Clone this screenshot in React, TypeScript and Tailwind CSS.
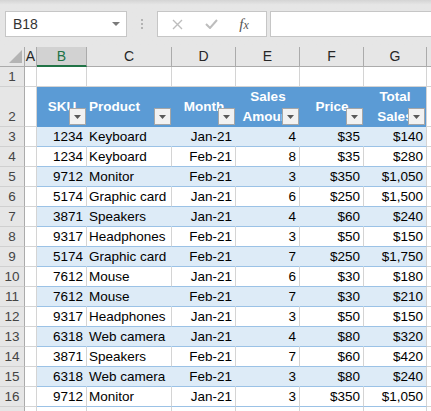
import React from 'react';

// Excel-like sheet: name box + formula bar, column/row headers, a blue table

const COL_W = ['w-[12px]', 'w-[50px]', 'w-[85px]', 'w-[64px]', 'w-[64px]', 'w-[64px]', 'w-[63px]'];
const COL_LETTERS = ['A', 'B', 'C', 'D', 'E', 'F', 'G'];

type Row = [string, string, string, string, string, string];

const rows: Row[] = [
  ['1234', 'Keyboard', 'Jan-21', '4', '$35', '$140'],
  ['1234', 'Keyboard', 'Feb-21', '8', '$35', '$280'],
  ['9712', 'Monitor', 'Feb-21', '3', '$350', '$1,050'],
  ['5174', 'Graphic card', 'Jan-21', '6', '$250', '$1,500'],
  ['3871', 'Speakers', 'Jan-21', '4', '$60', '$240'],
  ['9317', 'Headphones', 'Feb-21', '3', '$50', '$150'],
  ['5174', 'Graphic card', 'Feb-21', '7', '$250', '$1,750'],
  ['7612', 'Mouse', 'Jan-21', '6', '$30', '$180'],
  ['7612', 'Mouse', 'Feb-21', '7', '$30', '$210'],
  ['9317', 'Headphones', 'Jan-21', '3', '$50', '$150'],
  ['6318', 'Web camera', 'Jan-21', '4', '$80', '$320'],
  ['3871', 'Speakers', 'Feb-21', '7', '$60', '$420'],
  ['6318', 'Web camera', 'Feb-21', '3', '$80', '$240'],
  ['9712', 'Monitor', 'Jan-21', '3', '$350', '$1,050'],
];

const headers = [
  { lines: ['SKU'], align: 'justify-center text-center' },
  { lines: ['Product'], align: 'justify-start text-left pl-[2px]' },
  { lines: ['Month'], align: 'justify-center text-center' },
  { lines: ['Sales', 'Amount'], align: 'justify-center text-center' },
  { lines: ['Price'], align: 'justify-center text-center' },
  { lines: ['Total', 'Sales'], align: 'justify-center text-center' },
];

function FilterButton() {
  return (
    <div className="absolute right-[1px] bottom-[2px] w-[17px] h-[17px] bg-[#f2f2f2] border border-[#a6a6a6] flex items-center justify-center">
      <svg width="7" height="4" viewBox="0 0 7 4">
        <path d="M0 0 L7 0 L3.5 4 Z" fill="#595959" />
      </svg>
    </div>
  );
}

function RowHeader({ n, tall }: { n?: number; tall?: boolean }) {
  return (
    <div
      className={`w-[25px] shrink-0 ${tall ? 'h-[40px]' : 'h-[20px]'} bg-[#e6e6e6] border-r border-r-[#ababab] border-b border-b-[#d0d0d0] flex items-end justify-center text-[13.5px] leading-[18px] text-[#444]`}
    >
      {n}
    </div>
  );
}

function GridCell({ w, tall }: { w: string; tall?: boolean }) {
  return <div className={`${w} shrink-0 ${tall ? 'h-[40px]' : 'h-[20px]'} bg-white border-r border-b border-[#d4d4d4]`} />;
}

function Filler({ tall }: { tall?: boolean }) {
  return <div className={`flex-1 ${tall ? 'h-[40px]' : 'h-[20px]'} bg-white border-b border-[#d4d4d4]`} />;
}

export default function App() {
  return (
    <div className="w-[431px] h-[411px] overflow-hidden bg-white font-['Liberation_Sans',Arial,sans-serif] select-none">
      {/* formula bar */}
      <div className="h-[47px] bg-gradient-to-b from-[#d4d4d4] via-[#e6e6e6] via-[10%] to-[#e6e6e6] flex items-start pt-[11px] pl-[5px]">
        <div className="w-[122px] h-[26px] bg-white border border-[#c6c6c6] flex items-center justify-between pl-[7px] pr-[6px]">
          <span className="text-[14px] text-[#333]">B18</span>
          <svg width="8" height="4" viewBox="0 0 8 4">
            <path d="M0 0 L8 0 L4 4 Z" fill="#7a7a7a" />
          </svg>
        </div>
        <div className="w-[30px] h-[26px] flex flex-col items-center justify-center gap-[2px]">
          <span className="w-[2px] h-[2px] bg-[#b3b3b3]" />
          <span className="w-[2px] h-[2px] bg-[#b3b3b3]" />
          <span className="w-[2px] h-[2px] bg-[#b3b3b3]" />
        </div>
        <div className="w-[110px] h-[26px] bg-white border border-[#c6c6c6] flex items-center">
          <div className="w-[38px] flex justify-center">
            <svg width="11" height="11" viewBox="0 0 11 11">
              <path d="M1 1 L10 10 M10 1 L1 10" stroke="#bdbdbd" strokeWidth="1.4" />
            </svg>
          </div>
          <div className="w-[30px] flex justify-center">
            <svg width="13" height="10" viewBox="0 0 13 10">
              <path d="M1 5 L5 9 L12 1" stroke="#bdbdbd" strokeWidth="2" fill="none" />
            </svg>
          </div>
          <div className="flex-1 flex justify-center pr-[4px]">
            <span className="font-['Liberation_Serif',serif] italic text-[15px] text-[#555] leading-none">
              f<span className="text-[12px]">x</span>
            </span>
          </div>
        </div>
        <div className="ml-[3px] flex-1 h-[26px] bg-white border border-[#c6c6c6] border-r-0" />
      </div>

      {/* column headers */}
      <div className="flex h-[20px] bg-[#e6e6e6]">
        <div className="w-[25px] shrink-0 h-[20px] border-r border-b border-[#ababab] relative">
          <svg className="absolute right-[2px] bottom-[3px]" width="13" height="13" viewBox="0 0 13 13">
            <path d="M13 0 L13 13 L0 13 Z" fill="#b4b4b4" />
          </svg>
        </div>
        {COL_LETTERS.map((c, i) =>
          c === 'B' ? (
            <div
              key={c}
              className={`${COL_W[i]} shrink-0 h-[20px] bg-[#d2d2d2] border-r border-r-[#ababab] border-b-2 border-b-[#217346] flex items-center justify-center text-[14px] text-[#217346]`}
            >
              {c}
            </div>
          ) : (
            <div
              key={c}
              className={`${COL_W[i]} shrink-0 h-[20px] border-r border-b border-[#ababab] flex items-center justify-center text-[14px] text-[#262626]`}
            >
              {c}
            </div>
          )
        )}
        <div className="flex-1 h-[20px] border-b border-[#ababab]" />
      </div>

      {/* row 1 */}
      <div className="flex">
        <RowHeader n={1} />
        {COL_W.map((w, i) => (
          <GridCell key={i} w={w} />
        ))}
        <Filler />
      </div>

      {/* row 2 : table header */}
      <div className="flex">
        <RowHeader n={2} tall />
        <GridCell w={COL_W[0]} tall />
        {headers.map((h, i) => (
          <div
            key={i}
            className={`${COL_W[i + 1]} shrink-0 h-[40px] relative bg-[#5b9bd5] ${i === 5 ? 'border-r border-r-[#d4d4d4]' : ''} flex items-center ${h.align} text-white font-bold text-[13.5px] leading-[20px] overflow-hidden`}
          >
            <div className="whitespace-nowrap">
              {h.lines.map((l) => (
                <div key={l}>{l}</div>
              ))}
            </div>
            <FilterButton />
          </div>
        ))}
        <Filler tall />
      </div>

      {/* data rows */}
      {rows.map((r, ri) => {
        const band = ri % 2 === 0;
        return (
          <div key={ri} className="flex">
            <RowHeader n={ri + 3} />
            <GridCell w={COL_W[0]} />
            {r.map((v, ci) => {
              const left = ci === 1;
              const last = ci === 5;
              const bg = band ? 'bg-[#ddebf7]' : 'bg-white';
              const br = last || !band ? 'border-r border-r-[#d4d4d4]' : 'border-r border-r-[#ddebf7]';
              return (
                <div
                  key={ci}
                  className={`${COL_W[ci + 1]} shrink-0 h-[20px] ${bg} ${br} border-b border-b-[#9bc2e6] flex items-end pb-[1px] ${left ? 'justify-start pl-[2px]' : 'justify-end pr-[3px]'} text-[13.5px] leading-[17px] text-black whitespace-nowrap overflow-hidden`}
                >
                  {v}
                </div>
              );
            })}
            <Filler />
          </div>
        );
      })}

      {/* row 17 sliver, its number lies below the window */}
      <div className="flex">
        <RowHeader />
        {COL_W.map((w, i) => (
          <GridCell key={i} w={w} />
        ))}
        <Filler />
      </div>
    </div>
  );
}
